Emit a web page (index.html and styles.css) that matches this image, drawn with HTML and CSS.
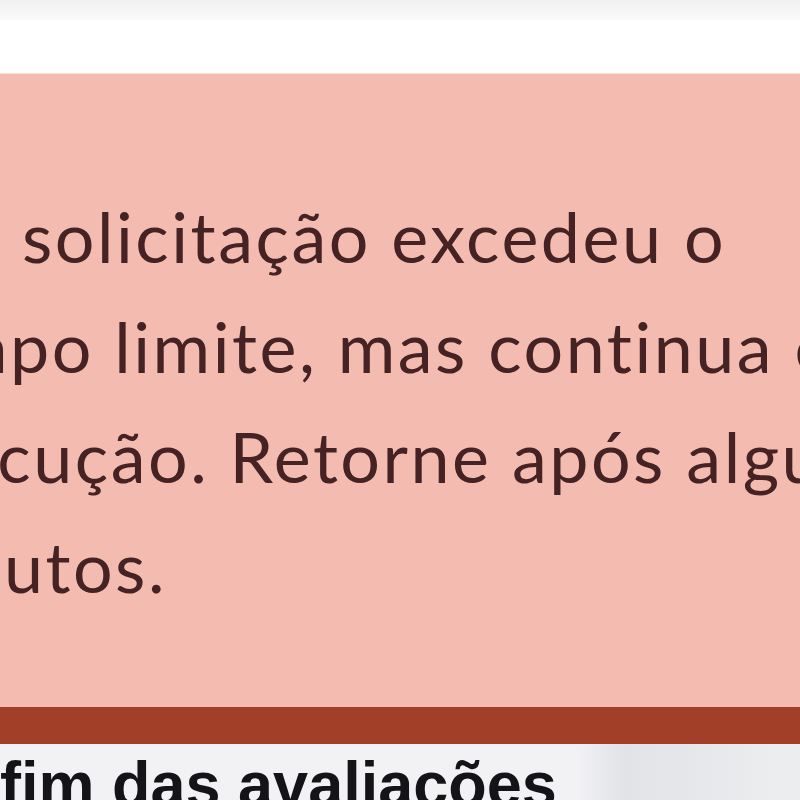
FILE: index.html
```html
<!DOCTYPE html>
<html lang="pt-BR">
<head>
<meta charset="utf-8">
<link rel="stylesheet" href="styles.css">
</head>
<body>
<div class="topbar"></div>
<div class="spacer"></div>
<div class="alert">
  <p class="alert-text">Sua solicitação excedeu o<br>tempo limite, mas continua em<br>execução. Retorne após alguns<br>minutos.</p>
</div>
<div class="below">
  <h2 class="below-title">fim das avaliações</h2>
</div>
</body>
</html>
```
FILE: styles.css
```css
html, body {
  margin: 0;
  padding: 0;
  background: #ffffff;
  overflow: hidden;
}
body {
  width: 800px;
  height: 800px;
}
.topbar {
  height: 20px;
  background: linear-gradient(#f0f0f0, #fbfbfb);
}
.spacer {
  height: 53px;
  background: #ffffff;
  border-bottom: 1px solid #f1e4d6;
}
.alert {
  background: #f4bbb0;
  height: 670px;
  border-bottom: 37px solid #a13f28;
  overflow: hidden;
  box-sizing: border-box;
  padding-top: 107px;
}
.alert-text {
  margin: 0 0 0 -117px;
  font-family: Lato, "Open Sans", sans-serif;
  font-size: 70px;
  letter-spacing: 2.5px;
  line-height: 110px;
  color: #452224;
  white-space: nowrap;
}
.below {
  height: 56px;
  overflow: hidden;
  background: linear-gradient(90deg, #f2f2f5 0%, #f2f2f5 72%, #e1e3e6 78%, #eceef0 100%);
}
.below-title {
  margin: 0;
  padding-top: 4px;
  font-family: "Liberation Sans", Arial, sans-serif;
  font-weight: bold;
  font-size: 63px;
  line-height: 72px;
  color: #141418;
}
```
